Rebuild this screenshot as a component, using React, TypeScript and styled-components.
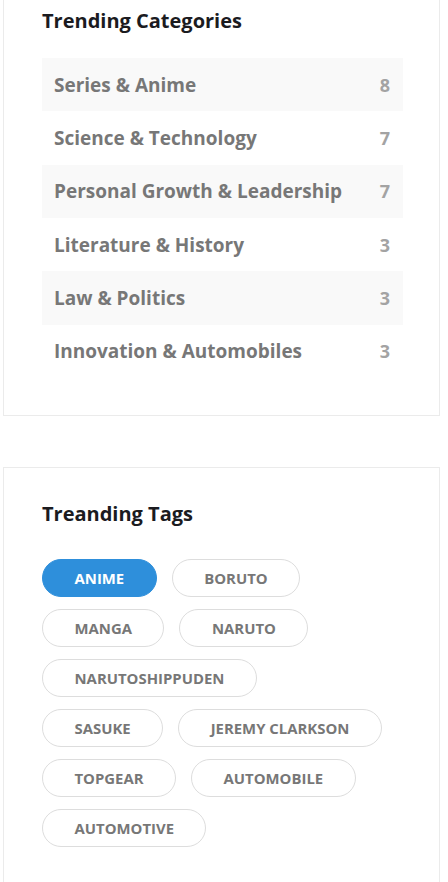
import React from "react";
import styled, { createGlobalStyle } from "styled-components";

const Global = createGlobalStyle`
  html, body { margin: 0; padding: 0; background: #ffffff; }
  body { font-family: "Open Sans", "Noto Sans", sans-serif; overflow: hidden; }
  * { box-sizing: border-box; }
`;

const Page = styled.div`
  width: 448px;
  margin-top: -26px;
  padding-left: 3px;
  display: flex;
  flex-direction: column;
  gap: 51px;
`;

const Card = styled.section<{ $pt: number; $pb: number }>`
  width: 437px;
  border: 1px solid #ebebeb;
  background: #fff;
  padding: ${(p) => p.$pt}px 36px ${(p) => p.$pb}px 38px;
`;

const Title = styled.h3<{ $mb: number }>`
  margin: 0 0 ${(p) => p.$mb}px;
  font-size: 20px;
  line-height: 24px;
  font-weight: 700;
  color: #1b1b1f;
`;

const List = styled.ul`
  list-style: none;
  margin: 0;
  padding: 0;
`;

const Row = styled.li<{ $shaded: boolean }>`
  height: 53.33px;
  display: flex;
  align-items: center;
  justify-content: space-between;
  padding: 0 13px 0 12px;
  background: ${(p) => (p.$shaded ? "#f9f9f9" : "transparent")};
  font-size: 19px;
  font-weight: 700;
`;

const RowName = styled.span`
  color: #777777;
`;

const RowCount = styled.span`
  color: #a3a3a3;
  font-size: 18px;
`;

const Tags = styled.div`
  display: flex;
  flex-wrap: wrap;
  width: 375px;
`;

const Tag = styled.a<{ $active?: boolean }>`
  display: inline-flex;
  align-items: center;
  height: 38px;
  margin: 0 15px 12px 0;
  padding: 0 31.5px;
  border-radius: 19px;
  border: 1px solid ${(p) => (p.$active ? "#2e8fdb" : "#dddddd")};
  background: ${(p) => (p.$active ? "#2e8fdb" : "#fff")};
  color: ${(p) => (p.$active ? "#fff" : "#777777")};
  font-size: 14.9px;
  font-weight: 700;
  text-transform: uppercase;
  text-decoration: none;
  white-space: nowrap;
`;

const LineBreak = styled.span`
  flex-basis: 100%;
  height: 0;
`;

const categories = [
  ["Series & Anime", 8],
  ["Science & Technology", 7],
  ["Personal Growth & Leadership", 7],
  ["Literature & History", 3],
  ["Law & Politics", 3],
  ["Innovation & Automobiles", 3],
] as const;

const tags = [
  "Anime",
  "Boruto",
  "Manga",
  "Naruto",
  "Narutoshippuden",
  "Sasuke",
  "Jeremy Clarkson",
  "Topgear",
  "Automobile",
  "Automotive",
];

export default function App() {
  return (
    <>
      <Global />
      <Page>
        <Card $pt={34} $pb={37}>
          <Title $mb={25}>Trending Categories</Title>
          <List>
            {categories.map(([name, n], i) => (
              <Row key={name} $shaded={i % 2 === 0}>
                <RowName>{name}</RowName>
                <RowCount>{n}</RowCount>
              </Row>
            ))}
          </List>
        </Card>
        <Card $pt={34} $pb={28}>
          <Title $mb={33}>Treanding Tags</Title>
          <Tags>
            {tags.map((t, i) => (
              <React.Fragment key={t}>
                <Tag $active={i === 0} href="#">
                  {t}
                </Tag>
                {t === "Narutoshippuden" && <LineBreak />}
              </React.Fragment>
            ))}
          </Tags>
        </Card>
      </Page>
    </>
  );
}
